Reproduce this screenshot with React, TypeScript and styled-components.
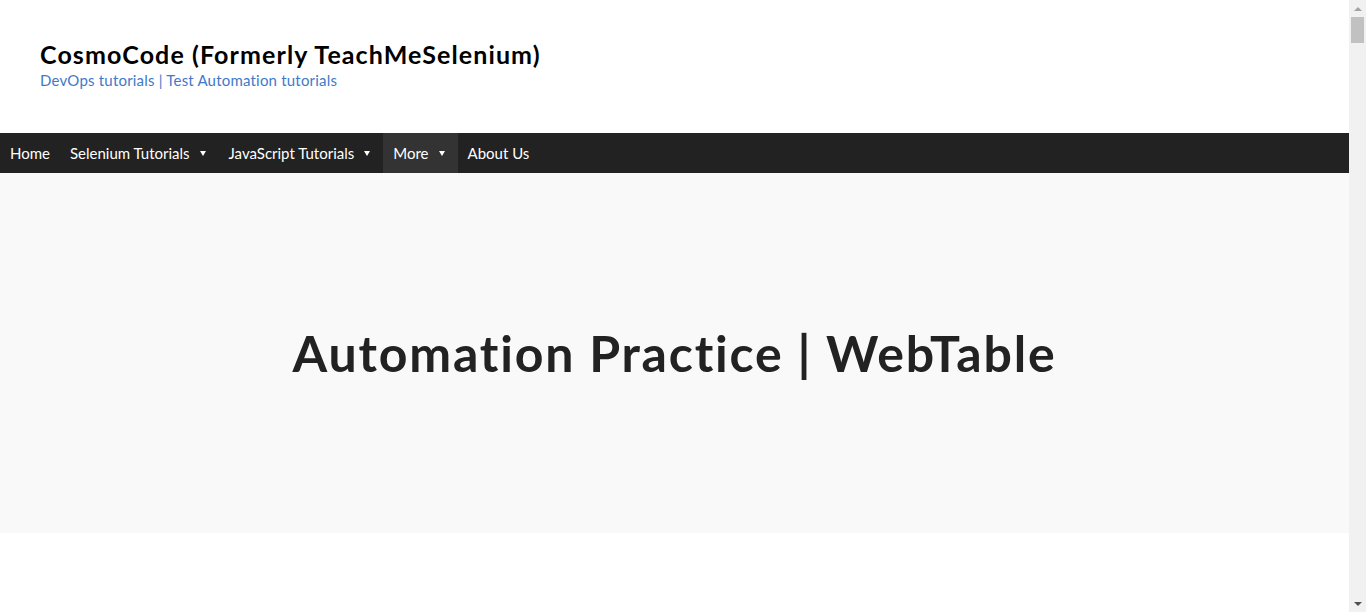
import styled, { createGlobalStyle } from 'styled-components';

const GlobalStyle = createGlobalStyle`
  html, body {
    margin: 0;
    padding: 0;
    background: #fff;
  }

  body {
    font-family: Lato, "Open Sans", sans-serif;
    color: #222;
  }

  ::-webkit-scrollbar {
    display: none;
  }
`;

const navItems = [
  { label: 'Home', dropdown: false, active: false },
  { label: 'Selenium Tutorials', dropdown: true, active: false },
  { label: 'JavaScript Tutorials', dropdown: true, active: false },
  { label: 'More', dropdown: true, active: true },
  { label: 'About Us', dropdown: false, active: false },
];

const Page = styled.div`
  min-height: 13600px;
  margin-right: 17px;
`;

const Branding = styled.header`
  height: 133px;
  box-sizing: border-box;
  padding: 39px 40px 0;
`;

const SiteTitle = styled.h1`
  margin: 0;
  font-size: 25px;
  line-height: 30px;
  font-weight: 700;
  letter-spacing: 1.1px;
  color: #000;
`;

const Tagline = styled.p`
  margin: 0;
  font-size: 15px;
  line-height: 22px;
  letter-spacing: 0.2px;
  color: #4179c9;
`;

const NavBar = styled.nav`
  display: flex;
  height: 40px;
  background: #222;
`;

const NavItem = styled.a<{ $active?: boolean; $dropdown?: boolean }>`
  display: flex;
  align-items: center;
  gap: 10px;
  padding: 0 ${p => (p.$dropdown ? '13px' : '10px')} 0 10px;
  font-size: 15px;
  color: #fff;
  text-decoration: none;
  background: ${p => (p.$active ? '#333' : 'transparent')};
`;

const Caret = styled.span`
  width: 0;
  height: 0;
  border-left: 3.5px solid transparent;
  border-right: 3.5px solid transparent;
  border-top: 5px solid #fff;
`;

const Hero = styled.section`
  height: 360px;
  background: #f9f9f9;
  display: flex;
  align-items: center;
  justify-content: center;
`;

const HeroTitle = styled.h2`
  margin: 0;
  font-size: 50px;
  font-weight: 700;
  letter-spacing: 1.8px;
  color: #222;
`;

/* window scrollbar as it appears in the capture */
const ScrollTrack = styled.div`
  position: fixed;
  top: 0;
  right: 0;
  bottom: 0;
  width: 17px;
  background: #f1f1f1;
  display: flex;
  flex-direction: column;
  align-items: center;
`;

const ScrollArrow = styled.div<{ $down?: boolean }>`
  flex: none;
  height: 17px;
  display: flex;
  align-items: center;
  justify-content: center;

  &::before {
    content: '';
    width: 0;
    height: 0;
    border-left: 4px solid transparent;
    border-right: 4px solid transparent;
    ${p =>
      p.$down
        ? 'border-top: 4px solid #505050;'
        : 'border-bottom: 4px solid #a3a3a3;'}
  }
`;

const ScrollThumb = styled.div`
  width: 13px;
  height: 26px;
  background: #c1c1c1;
`;

const ScrollSpace = styled.div`
  flex: 1;
`;

export default function App() {
  return (
    <>
      <GlobalStyle />
      <Page>
        <Branding>
          <SiteTitle>CosmoCode (Formerly TeachMeSelenium)</SiteTitle>
          <Tagline>DevOps tutorials | Test Automation tutorials</Tagline>
        </Branding>
        <NavBar>
          {navItems.map(item => (
            <NavItem
              key={item.label}
              href="#"
              $active={item.active}
              $dropdown={item.dropdown}
            >
              {item.label}
              {item.dropdown && <Caret />}
            </NavItem>
          ))}
        </NavBar>
        <Hero>
          <HeroTitle>Automation Practice | WebTable</HeroTitle>
        </Hero>
      </Page>
      <ScrollTrack>
        <ScrollArrow />
        <ScrollThumb />
        <ScrollSpace />
        <ScrollArrow $down />
      </ScrollTrack>
    </>
  );
}
